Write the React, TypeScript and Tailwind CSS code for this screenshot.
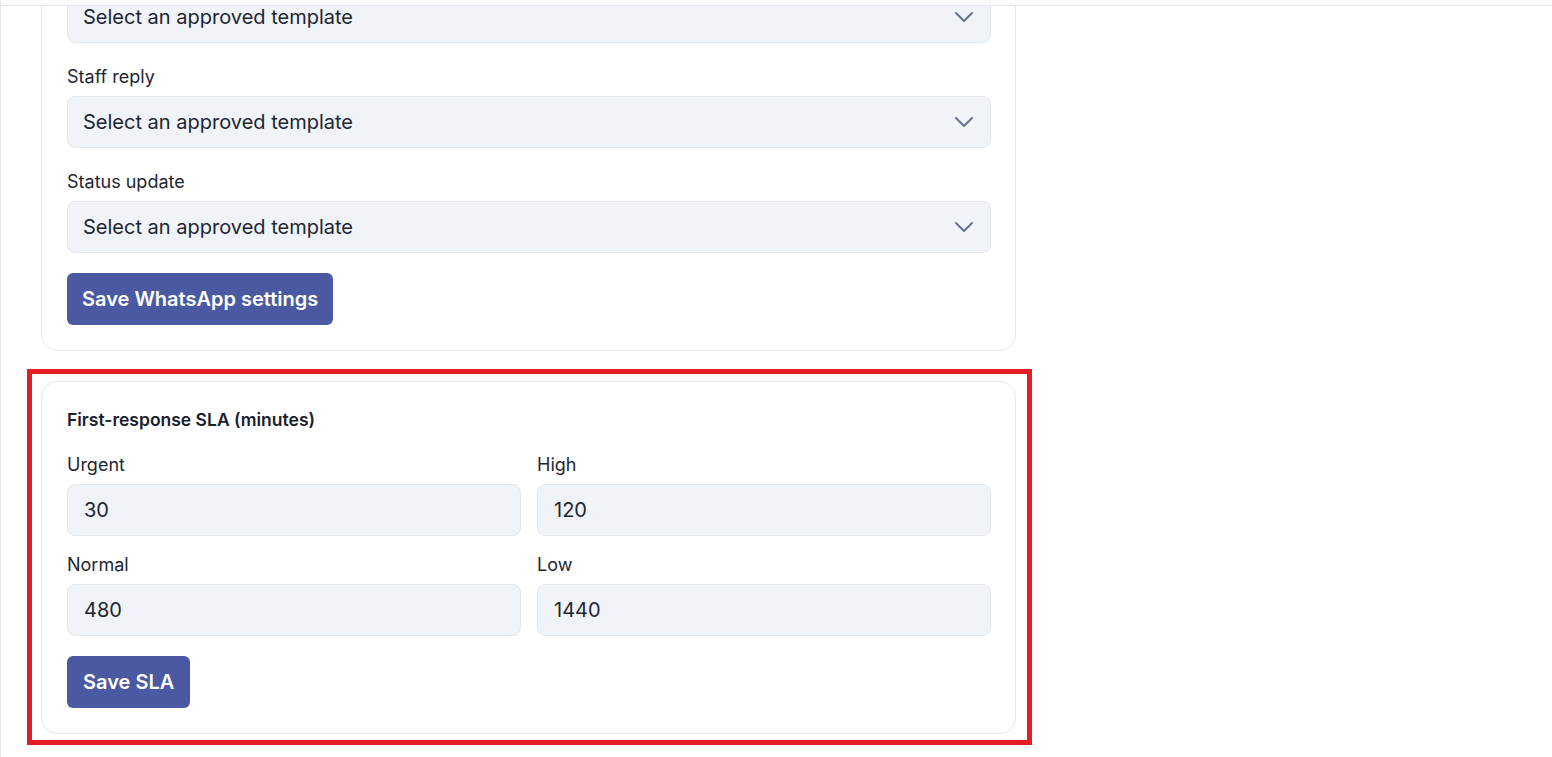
import { useState } from "react";

const TEMPLATE_FIELDS = [
  { id: "new_ticket", label: "New ticket" },
  { id: "staff_reply", label: "Staff reply" },
  { id: "status_update", label: "Status update" },
];

const SLA_FIELDS = [
  { id: "urgent", label: "Urgent", value: "30" },
  { id: "high", label: "High", value: "120" },
  { id: "normal", label: "Normal", value: "480" },
  { id: "low", label: "Low", value: "1440" },
];

function Chevron() {
  return (
    <svg width="20" height="12" viewBox="0 0 20 12" fill="none" stroke="#64748b" strokeWidth="2" strokeLinecap="round" strokeLinejoin="round">
      <path d="M2 2l8 8 8-8" />
    </svg>
  );
}

function TemplateSelect({ id, label }: { id: string; label: string }) {
  return (
    <div>
      <label htmlFor={id} className="block text-[18px] leading-[26px] text-[#1e2533] mb-[6px]">
        {label}
      </label>
      <div className="relative">
        <select
          id={id}
          defaultValue=""
          className="block w-full h-[52px] appearance-none rounded-lg border border-[#e2e8f0] bg-[#f0f3f8] pl-[15px] pr-12 text-[20px] text-[#1e2533] focus:outline-none"
        >
          <option value="">Select an approved template</option>
        </select>
        <span className="pointer-events-none absolute right-[17px] top-1/2 -translate-y-1/2">
          <Chevron />
        </span>
      </div>
    </div>
  );
}

function SlaInput({ id, label, value }: { id: string; label: string; value: string }) {
  const [v, setV] = useState(value);
  return (
    <div>
      <label htmlFor={id} className="block text-[18px] leading-[26px] text-[#1e2533] mb-[6px]">
        {label}
      </label>
      <input
        id={id}
        type="text"
        value={v}
        onChange={e => setV(e.target.value)}
        className="block w-full h-[52px] rounded-lg border border-[#e2e8f0] bg-[#f0f3f8] px-4 text-[20px] text-[#1e2533] focus:outline-none"
      />
    </div>
  );
}

export default function App() {
  return (
    <div
      className="h-[757px] overflow-hidden bg-white border-l border-[#e3e8ef]"
      style={{ fontFamily: "Inter, 'Noto Sans', sans-serif" }}
    >
      <div className="relative z-10 h-[6px] border-b border-[#e3e8ef] bg-white/70" />

      <main className="pl-[40px] flex flex-col gap-[30px]">
        <section className="-mt-[72px] w-[975px] rounded-2xl border border-[#e2e8f0] bg-white pt-6 pb-[25px] pl-[25px] pr-6">
          <div className="flex flex-col gap-[21px]">
            {TEMPLATE_FIELDS.map(f => (
              <TemplateSelect key={f.id} id={f.id} label={f.label} />
            ))}
          </div>
          <button className="mt-5 h-[52px] rounded-md bg-[#4b59a3] px-[15px] text-[20px] font-semibold text-white hover:bg-[#3f4c93]">
            Save WhatsApp settings
          </button>
        </section>

        <div className="relative w-[975px]">
          <section className="rounded-2xl border border-[#e2e8f0] bg-white pt-6 pb-[25px] pl-[25px] pr-6">
            <h3 className="text-[17.5px] leading-7 font-semibold text-[#1a202c] mb-[18px]">
              First-response SLA (minutes)
            </h3>
            <div className="grid grid-cols-2 gap-x-4 gap-y-4">
              {SLA_FIELDS.map(f => (
                <SlaInput key={f.id} id={f.id} label={f.label} value={f.value} />
              ))}
            </div>
            <button className="mt-5 h-[52px] rounded-md bg-[#4b59a3] px-4 text-[20px] font-semibold text-white hover:bg-[#3f4c93]">
              Save SLA
            </button>
          </section>
          {/* highlight annotation */}
          <div className="pointer-events-none absolute -left-[14px] -top-[12px] -right-[16px] -bottom-[11px] border-[5px] border-[#e41c23]" />
        </div>
      </main>
    </div>
  );
}
